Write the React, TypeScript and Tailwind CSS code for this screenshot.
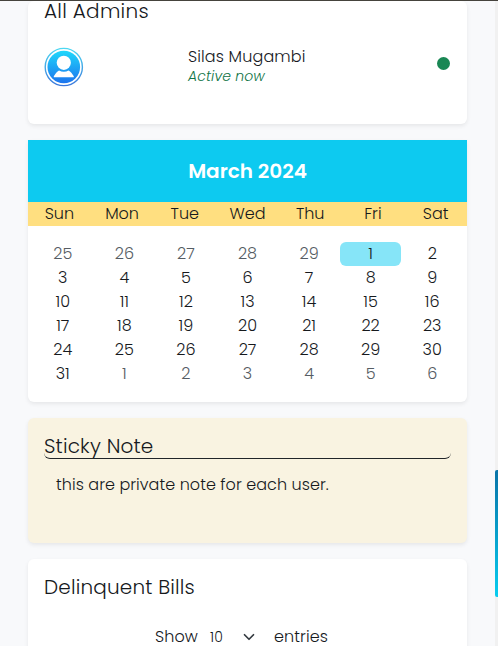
const weekdays = ["Sun", "Mon", "Tue", "Wed", "Thu", "Fri", "Sat"];

const days = Array.from({ length: 42 }, (_, i) => {
  if (i < 5) return { n: 25 + i, muted: true };
  if (i < 36) return { n: i - 4, muted: false };
  return { n: i - 35, muted: true };
});

const card = "rounded-md shadow-[0_2px_4px_rgba(0,0,0,0.075)]";

function Avatar() {
  return (
    <svg width="40" height="40" viewBox="0 0 40 40" className="block shrink-0">
      <defs>
        <linearGradient id="avatar" x1="0" y1="0" x2="0" y2="1">
          <stop offset="0" stopColor="#1fd8fb" />
          <stop offset="1" stopColor="#1c74ee" />
        </linearGradient>
        <linearGradient id="ring" x1="0" y1="0" x2="0" y2="1">
          <stop offset="0" stopColor="#4cd8f2" />
          <stop offset="1" stopColor="#3b78dc" />
        </linearGradient>
      </defs>
      <circle cx="19.8" cy="20" r="18.6" fill="none" stroke="url(#ring)" strokeWidth="1.4" />
      <circle cx="19.8" cy="20" r="16.3" fill="url(#avatar)" />
      <circle cx="19.8" cy="15.8" r="7.1" fill="#fff" />
      <path d="M9.800 30.200v-1c1.600-2.200 3.200-4.800 5.200-5.600 3 1.600 6.600 1.600 9.600 0 2 .8 3.600 3.400 5.200 5.600v1z" fill="#fff" />
    </svg>
  );
}

export default function App() {
  return (
    <div className="flex h-[646px] w-[498px] overflow-hidden border-t border-[#45433d] bg-[#f8f9fb] font-['Poppins','Inter',sans-serif] text-base font-light text-[#16191d]">
      <main className="ml-7 flex w-[439px] flex-col gap-4">
        <section className={`h-[123px] shrink-0 bg-white px-4 ${card}`}>
          <h2 className="-mt-0.5 text-xl leading-6 tracking-[0.28px]">All Admins</h2>
          <div className="mt-6 flex h-10">
            <Avatar />
            <div className="ml-[104px] flex-1 whitespace-nowrap">
              <div className="text-base leading-5 tracking-[0.13px]">Silas Mugambi</div>
              <div className="text-sm leading-[19px] tracking-[0.12px] text-[#0f7446] italic">Active now</div>
            </div>
            <div className="mt-[10px] mr-[1.5px] size-[13px] rounded-full bg-[#198754]" />
          </div>
        </section>

        <section className="h-[262px] shrink-0 rounded-b-md bg-white shadow-[0_2px_4px_rgba(0,0,0,0.075)]">
          <h2 className="h-[62px] bg-[#0dcaf0] text-center text-xl leading-[62px] font-semibold text-white">March 2024</h2>
          <div className="grid h-6 grid-cols-7 bg-[#ffdf80] text-center leading-6">
            {weekdays.map((d) => (
              <span key={d}>{d}</span>
            ))}
          </div>
          <div className="grid grid-cols-7 px-1 pt-4 text-center leading-6">
            {days.map((d, i) => (
              <span
                key={i}
                className={`h-6 ${d.muted ? "text-[#555c63]" : ""} ${i === 5 ? "rounded-md bg-[#86e5f8]" : ""}`}
              >
                {d.n}
              </span>
            ))}
          </div>
        </section>

        <section className={`h-[125px] shrink-0 bg-[#f9f3e1] px-4 pt-4 ${card}`}>
          <h2 className="h-[25px] rounded-md border-b border-[#212529] text-xl leading-6 tracking-[0.18px]">Sticky Note</h2>
          <p className="px-3 pt-[14px] leading-6 tracking-[0.05px] whitespace-nowrap">this are private note for each user.</p>
        </section>

        <section className={`h-[140px] shrink-0 bg-white px-4 pt-4 ${card}`}>
          <h2 className="text-xl leading-6 tracking-[0.18px]">Delinquent Bills</h2>
          <div className="mt-[26px] flex h-6 items-center pl-[111px] leading-6">
            <span className="w-[55px] tracking-[0.1px]">Show</span>
            <span className="w-[33px] text-sm tracking-[0.1px]">10</span>
            <svg width="12" height="12" viewBox="0 0 16 16" fill="none" stroke="#343a40" strokeWidth="2.3" strokeLinecap="round" strokeLinejoin="round">
              <path d="m2 5 6 6 6-6" />
            </svg>
            <span className="ml-[19px] tracking-[0.1px]">entries</span>
          </div>
        </section>
      </main>
      <div className="ml-auto w-[3px] bg-[#f1f1f1] pt-[469px]">
        <div className="h-[127px] rounded-l-[2px] bg-linear-to-b from-[#0a74a8] to-[#08cdef]" />
      </div>
    </div>
  );
}
